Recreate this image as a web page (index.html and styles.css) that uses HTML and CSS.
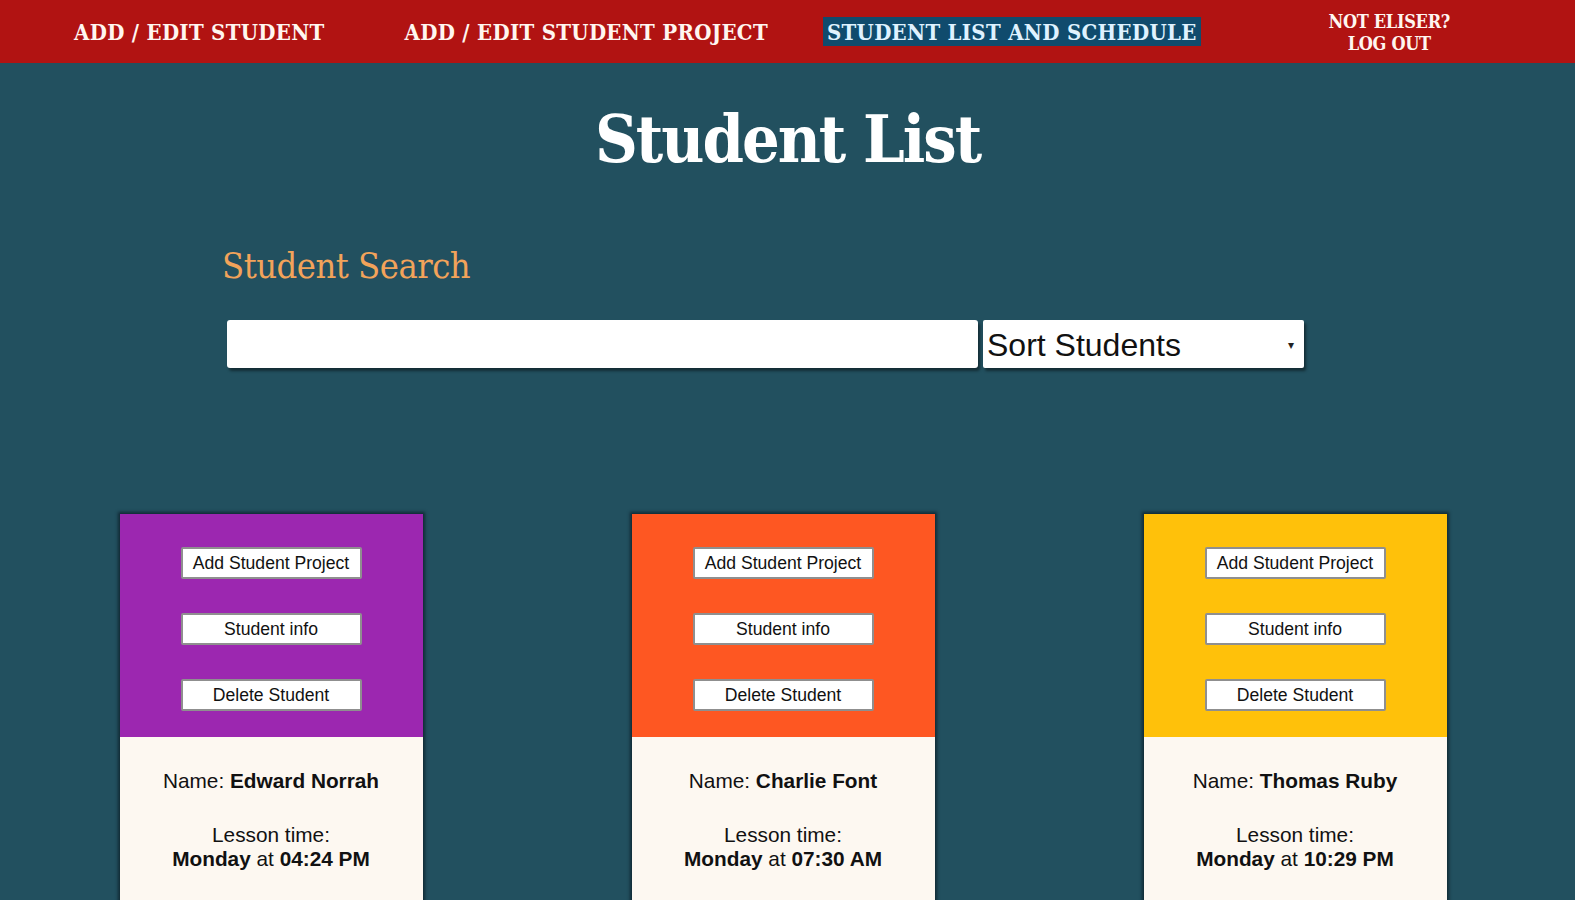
FILE: index.html
```html
<!DOCTYPE html>
<html lang="en">
<head>
<meta charset="utf-8">
<title>Student List</title>
<link rel="stylesheet" href="styles.css">
</head>
<body>
<nav class="topnav">
  <a class="nav-item nav-first" href="#">ADD / EDIT STUDENT</a>
  <a class="nav-item nav-second" href="#">ADD / EDIT STUDENT PROJECT</a>
  <a class="nav-item nav-active" href="#">STUDENT LIST AND SCHEDULE</a>
  <a class="nav-item nav-logout" href="#">NOT ELISER?<br>LOG OUT</a>
</nav>

<main class="page">
  <h1 class="page-title">Student List</h1>

  <section class="search">
    <h2 class="search-title">Student Search</h2>
    <div class="search-row">
      <input class="search-input" type="text">
      <div class="sort-select">
        <span>Sort Students</span>
        <span class="sort-arrow">&#9662;</span>
      </div>
    </div>
  </section>

  <section class="cards">
    <article class="card">
      <div class="card-top card-purple">
        <button class="card-btn">Add Student Project</button>
        <button class="card-btn">Student info</button>
        <button class="card-btn">Delete Student</button>
      </div>
      <div class="card-info">
        <p class="info-line">Name: <b>Edward Norrah</b></p>
        <p class="info-line">Lesson time:<br><b>Monday</b> at <b>04:24 PM</b></p>
      </div>
    </article>
    <article class="card">
      <div class="card-top card-orange">
        <button class="card-btn">Add Student Project</button>
        <button class="card-btn">Student info</button>
        <button class="card-btn">Delete Student</button>
      </div>
      <div class="card-info">
        <p class="info-line">Name: <b>Charlie Font</b></p>
        <p class="info-line">Lesson time:<br><b>Monday</b> at <b>07:30 AM</b></p>
      </div>
    </article>
    <article class="card">
      <div class="card-top card-amber">
        <button class="card-btn">Add Student Project</button>
        <button class="card-btn">Student info</button>
        <button class="card-btn">Delete Student</button>
      </div>
      <div class="card-info">
        <p class="info-line">Name: <b>Thomas Ruby</b></p>
        <p class="info-line">Lesson time:<br><b>Monday</b> at <b>10:29 PM</b></p>
      </div>
    </article>
  </section>
</main>
</body>
</html>
```

FILE: styles.css
```css
html, body {
  margin: 0;
  padding: 0;
}
body {
  background: #22505f;
  font-family: "DejaVu Serif Condensed", "DejaVu Serif", serif;
  overflow: hidden;
}
.topnav {
  height: 63px;
  background: #b11312;
  display: flex;
  align-items: center;
  padding-left: 74px;
  padding-right: 125px;
}
.nav-item {
  color: #fff6f0;
  text-decoration: none;
  font-size: 22px;
  font-weight: bold;
  letter-spacing: 0.3px;
  white-space: nowrap;
}
.nav-first { margin-right: 80px; }
.nav-second { margin-right: 55px; }
.nav-active {
  background: #104b6d;
  color: #dff2ff;
  padding: 2px 4px 1px 4px;
}
.nav-logout {
  margin-left: auto;
  text-align: center;
  font-size: 18px;
  line-height: 22px;
  letter-spacing: -0.3px;
  margin-top: 2px;
}
.page-title {
  margin: 36px 0 0 0;
  text-align: center;
  color: #ffffff;
  font-size: 66px;
  line-height: 80px;
  letter-spacing: -2px;
  font-weight: bold;
}
.search {
  padding-left: 222px;
  margin-top: 66px;
}
.search-title {
  margin: 0;
  color: #f2a35a;
  font-weight: normal;
  font-size: 36px;
  line-height: 42px;
  letter-spacing: -0.5px;
}
.search-row {
  display: flex;
  gap: 5px;
  margin-top: 33px;
  padding-left: 5px;
}
.search-input {
  width: 751px;
  height: 48px;
  box-sizing: border-box;
  border: none;
  border-radius: 3px;
  background: #ffffff;
  box-shadow: 2px 3px 3px rgba(0, 0, 0, 0.45);
  margin: 0;
  padding: 0 8px;
}
.sort-select {
  width: 321px;
  height: 48px;
  box-sizing: border-box;
  background: #ffffff;
  border-radius: 2px;
  box-shadow: 2px 3px 3px rgba(0, 0, 0, 0.45);
  display: flex;
  align-items: center;
  justify-content: space-between;
  padding: 2px 10px 0 4px;
  font-family: "Liberation Sans", Arial, sans-serif;
  font-size: 32px;
  color: #111;
}
.sort-arrow {
  font-size: 12px;
  color: #222;
}
.cards {
  display: grid;
  grid-template-columns: repeat(3, 512px);
  padding-left: 15px;
  margin-top: 146px;
}
.card {
  width: 303px;
  justify-self: center;
  box-shadow: 0 0 3px 2px rgba(10, 25, 35, 0.7);
  height: 420px;
  background: #fdf8f1;
}
.card-top {
  height: 223px;
  box-sizing: border-box;
  padding-top: 33px;
  display: flex;
  flex-direction: column;
  align-items: center;
  gap: 34px;
}
.card-purple { background: #9c27b0; }
.card-orange { background: #fe5722; }
.card-amber { background: #ffc10a; }
.card-btn {
  width: 181px;
  height: 32px;
  box-sizing: border-box;
  background: #ffffff;
  border: 2px solid #8f8f8f;
  border-radius: 2px;
  font-family: "Liberation Sans", Arial, sans-serif;
  font-size: 17.6px;
  color: #111;
  padding: 0;
  margin: 0;
}
.card-info {
  text-align: center;
  font-family: "Liberation Sans", Arial, sans-serif;
  font-size: 20.8px;
  color: #111;
  padding-top: 32px;
}
.info-line {
  margin: 0 0 30px 0;
  line-height: 24px;
}
```
